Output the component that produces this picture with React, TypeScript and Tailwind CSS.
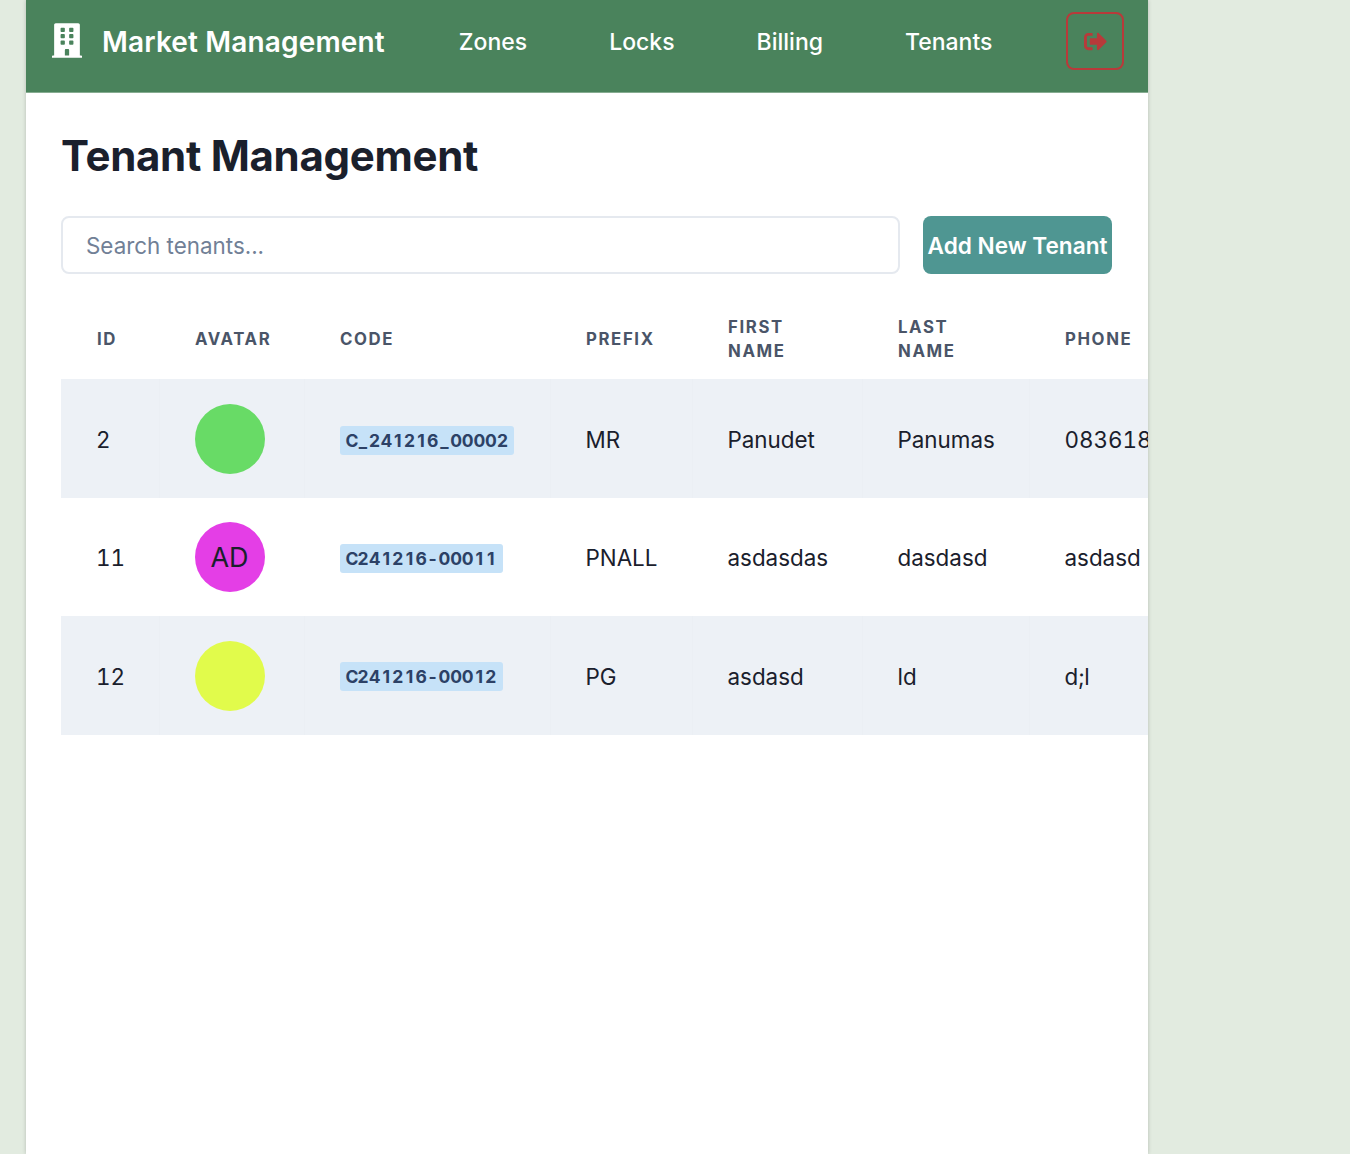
import { FaBuilding, FaSignOutAlt } from "react-icons/fa";

const cols = [98, 145, 246, 142, 170, 167, 140];
const rows = [
  { id: "2", color: "bg-[#68db66]", avatar: "", code: "C_241216_00002", prefix: "MR", first: "Panudet", last: "Panumas", phone: "0836189999" },
  { id: "11", color: "bg-[#e43ee6]", avatar: "AD", code: "C241216-00011", prefix: "PNALL", first: "asdasdas", last: "dasdasd", phone: "asdasd" },
  { id: "12", color: "bg-[#e1fb4b]", avatar: "", code: "C241216-00012", prefix: "PG", first: "asdasd", last: "ld", phone: "d;l" },
];
const heads = ["ID", "AVATAR", "CODE", "PREFIX", "FIRST NAME", "LAST NAME", "PHONE"];

export default function App() {
  return (
    <div className="h-[1154px] overflow-hidden bg-[#e2ebe0] font-['Inter',sans-serif] text-[#1a202c]">
      <div className="ml-[26px] w-[1122px] h-full bg-white shadow-[0_0_4px_rgba(0,0,0,0.2)] overflow-hidden">
        <header className="h-[93px] bg-[#4a835c] flex items-center pl-[26px] pb-[10px] gap-[66px] border-b border-[#e2ebe0]/40">
          <div className="flex items-center gap-[20px] text-white">
            <FaBuilding className="w-[30px] h-[35px] -mt-[1px]" />
            <span className="pt-[2px] text-[28px] font-semibold tracking-[0.15px] leading-none">Market Management</span>
          </div>
          <nav className="flex gap-[66px]">
            {["Zones", "Locks", "Billing", "Tenants"].map((n) => (
              <a key={n} className="px-2 pt-[2px] text-white text-[23px] font-medium leading-none">{n}</a>
            ))}
          </nav>
          <button className="w-[58px] h-[58px] shrink-0 flex items-center justify-center border-2 border-[#b83a3a] rounded-[8px] text-[#b83a3a]">
            <FaSignOutAlt className="w-[23px] h-[23px]" />
          </button>
        </header>
        <main className="pl-[35px]">
          <h1 className="text-[42px] font-bold leading-none mt-[42px] tracking-[-0.3px]">Tenant Management</h1>
          <div className="flex gap-[23px] mt-[39px] w-[1051px]">
            <input
              placeholder="Search tenants..."
              className="flex-1 h-[58px] px-[23px] text-[22.4px] border-2 border-[#e5e9ef] rounded-[8px] outline-none placeholder:text-[#718096]"
            />
            <button className="w-[189px] h-[58px] pt-[1px] bg-[#4f9692] text-white text-[22.6px] font-semibold rounded-[8px] whitespace-nowrap flex items-center justify-center">
              Add New Tenant
            </button>
          </div>
          <div className="mt-[30px] w-[1087px] overflow-hidden">
            <table className="table-fixed w-[1108px] border-collapse">
              <colgroup>
                {cols.map((w, i) => <col key={i} style={{ width: w }} />)}
              </colgroup>
              <thead>
                <tr className="h-[75px]">
                  {heads.map((h) => (
                    <th key={h} className="text-left pl-[36px] pr-[36px] pb-[5px] text-[16.8px] leading-[24px] font-bold tracking-[1.6px] text-[#4a5568]">{h}</th>
                  ))}
                </tr>
              </thead>
              <tbody>
                {rows.map((r, i) => {
                  const line = i % 2 === 0 ? "border-r border-[#ebeff4]" : "border-r border-transparent";
                  const top = i === 0 ? "pt-[4px]" : "pt-[3px]";
                  return (
                    <tr key={r.id} className={`h-[118.5px] ${i % 2 === 0 ? "bg-[#edf1f6]" : "bg-white"}`}>
                      <td className={`pl-[35px] ${top} text-[22.4px] tabular-nums ${line}`}>{r.id}</td>
                      <td className={`pl-[35px] pt-[1px] ${line}`}>
                        <div className={`w-[70px] h-[70px] pt-[2px] rounded-full flex items-center justify-center text-[27px] ${r.color}`}>{r.avatar}</div>
                      </td>
                      <td className={`pl-[35px] ${top} ${line}`}>
                        <span className="inline-block bg-[#c6e2f8] rounded-[3px] px-[6px] h-[29px] leading-[29px] text-[17.5px] font-bold text-[#2c4166] whitespace-nowrap">
                          {r.code.split("").map((c, j) => (
                            <span key={j} className="inline-block w-[11.64px] text-center">{c}</span>
                          ))}
                        </span>
                      </td>
                      <td className={`pl-[35px] ${top} text-[22.4px] ${line}`}>{r.prefix}</td>
                      <td className={`pl-[35px] ${top} text-[22.4px] ${line}`}>{r.first}</td>
                      <td className={`pl-[35px] ${top} text-[22.4px] ${line}`}>{r.last}</td>
                      <td className={`pl-[35px] ${top} text-[22.4px] tabular-nums whitespace-nowrap`}>{r.phone}</td>
                    </tr>
                  );
                })}
              </tbody>
            </table>
          </div>
        </main>
      </div>
    </div>
  );
}
